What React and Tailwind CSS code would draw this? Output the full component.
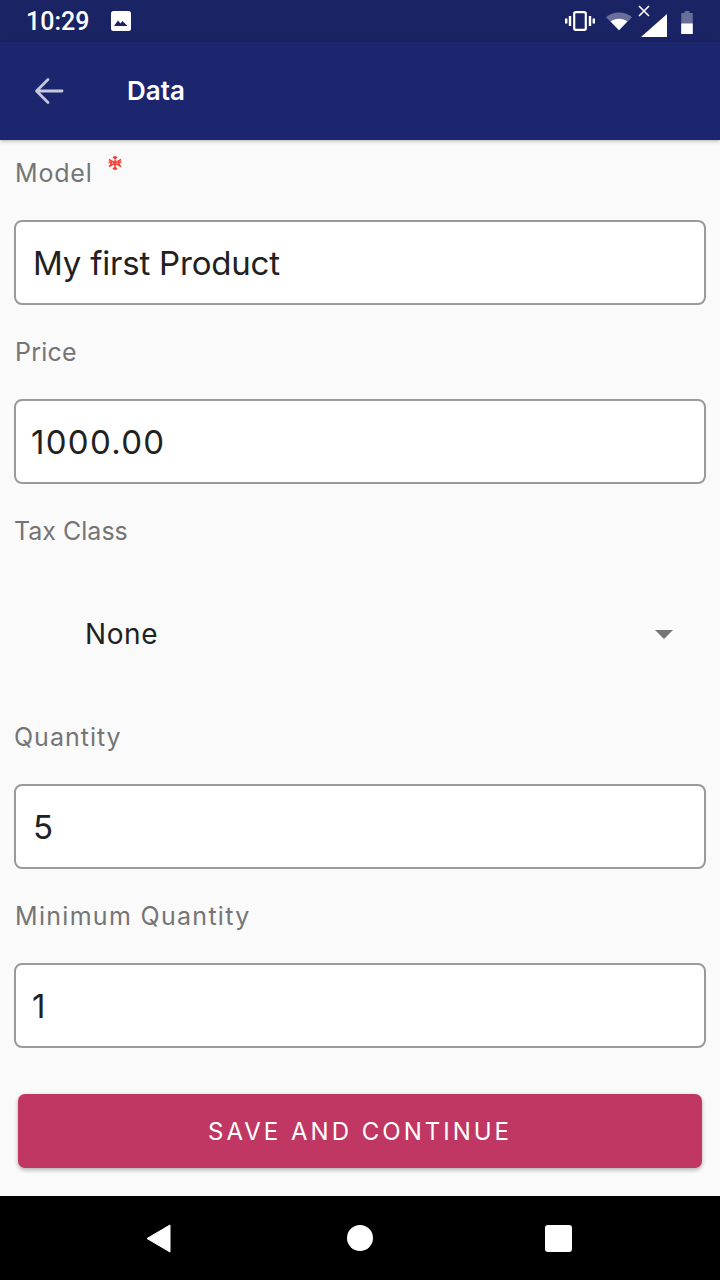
import React from "react";

const Field = ({ label, value, required, indent = "pl-4", labelClass = "tracking-[0.6px]", valueClass = "tracking-[0.7px]" }) => (
  <div>
    <div className={`h-[87px] pb-[6px] flex items-center pl-[14px] text-[25px] text-[#757575] ${labelClass}`}>
      <span>{label}</span>
      {required && (
        <svg className="ml-[14px] -mt-[22px]" width="16" height="16" viewBox="0 0 16 16" stroke="#f44336" strokeWidth="1.6" fill="none">
          <path d="M8 1v14M1.900 4.500l12.200 7M14.100 4.500l-12.200 7M6 1.800l2 2 2-2M6 14.200l2-2 2 2M1.600 7l2.700 .8-.7 2.700M14.400 7l-2.700 .8 .7 2.700" />
        </svg>
      )}
    </div>
    <div className={`mx-[14px] h-[85px] pt-[3px] bg-white border-2 border-[#9a9a9a] rounded-[8px] flex items-center ${indent} text-[33px] text-[#212121] ${valueClass}`}>
      {value}
    </div>
  </div>
);

export default function App() {
  return (
    <div className="w-[720px] h-[1280px] flex flex-col bg-[#fafafa] overflow-hidden font-['Inter','Noto_Sans',sans-serif]">
      <div className="h-[42px] bg-[#1a2364] flex items-center justify-between text-white shrink-0">
        <div className="flex items-center">
          <span className="ml-[26px] pt-[2px] text-[25px] font-medium font-['Roboto',sans-serif]">10:29</span>
          <svg className="ml-[22px]" width="20" height="20" viewBox="0 0 20 20">
            <rect width="20" height="20" rx="2.5" fill="#fff" />
            <path d="M3 15l4-5.500 2.500 3 2-2.500 5 5z" fill="#1a2364" />
          </svg>
        </div>
        <div className="flex items-center mr-[27px]">
          <svg width="30" height="20" viewBox="0 0 30 20" fill="none" stroke="#fff" strokeWidth="2.4">
            <rect x="9.200" y="1.200" width="11.600" height="17.600" rx="1.500" strokeWidth="2.200" />
            <path d="M5 5v10M1.200 7.500v5M25 5v10M28.800 7.500v5" />
          </svg>
          <svg className="ml-[11px]" width="26" height="20" viewBox="0 0 28 20">
            <path d="M0 6C7-1 21-1 28 6L14 20z" fill="#fff" fillOpacity="0.35" />
            <path d="M5 10.500c5-4 13-4 18 0L14 20z" fill="#fff" />
          </svg>
          <div className="relative w-[30px] h-[32px] ml-[6px]">
            <svg className="absolute left-0 top-0" width="12" height="12" viewBox="0 0 12 12" stroke="#fff" strokeWidth="1.6">
              <path d="M1 1l10 10M11 1L1 11" />
            </svg>
            <svg className="absolute right-[1px] bottom-0" width="26" height="23" viewBox="0 0 26 23">
              <path d="M26 0v23H0z" fill="#fff" />
            </svg>
          </div>
          <svg className="ml-[13px] mt-[2px]" width="12" height="23" viewBox="0 0 12 24">
            <path d="M3.500 0h5v2H12v22H0V2h3.500z" fill="#fff" fillOpacity="0.35" />
            <rect y="13" width="12" height="11" fill="#fff" />
          </svg>
        </div>
      </div>

      <div className="h-[98px] bg-[#1c266e] flex items-center shrink-0 shadow-[0_1px_4px_rgba(0,0,0,0.3)] z-10">
        <svg className="ml-[34px]" width="30" height="28" viewBox="0 0 30 28" fill="none" stroke="#c6c8dc" strokeWidth="2.8" strokeLinecap="round" strokeLinejoin="round">
          <path d="M28 14H3M14 2.500L2.500 14 14 25.500" />
        </svg>
        <span className="ml-[63px] pb-[2px] text-[26px] font-semibold text-white">Data</span>
      </div>

      <div className="flex-1 flex flex-col -mt-[7px]">
        <Field label="Model" value="My first Product" required indent="pl-[17px]" labelClass="tracking-[0.8px] pl-[15px]" valueClass="tracking-[-0.2px]" />
        <div className="mt-[7px]">
          <Field label="Price" value="1000.00" indent="pl-[15px]" labelClass="tracking-[0.2px] pl-[15px]" valueClass="tracking-[1.300px]" />
        </div>
        <div className="h-[80px] mt-[7px] pt-[2px] flex items-center pl-[14px] text-[25px] text-[#757575] tracking-[0px]">
          Tax Class
        </div>
        <div className="h-[126px] flex items-center justify-between pl-[85px] pr-[47px] text-[28px] text-[#212121] tracking-[0.6px]">
          <span>None</span>
          <svg width="18" height="9" viewBox="0 0 18 9">
            <path d="M0 0h18L9 9z" fill="#757575" />
          </svg>
        </div>
        <Field label="Quantity" value="5" indent="pl-[17px]" labelClass="tracking-[1px]" />
        <div className="mt-[7px]">
          <Field label="Minimum Quantity" value="1" indent="pl-[16px]" labelClass="tracking-[1.300px] pl-[15px]" />
        </div>
        <button className="mx-[18px] mt-[46px] h-[74px] pt-[2px] bg-[#c13763] rounded-[7px] text-white text-[24px] tracking-[3px] shadow-[0_2px_4px_rgba(0,0,0,0.3)]">
          SAVE AND CONTINUE
        </button>
      </div>

      <div className="h-[84px] bg-black flex items-center justify-center shrink-0">
        <div className="w-[426px] mr-[2px] flex items-center justify-between">
          <svg width="25" height="29" viewBox="0 0 25 29">
            <path d="M24 1v27L1 14.500z" fill="#fff" stroke="#fff" strokeLinejoin="round" />
          </svg>
          <div className="w-[26px] h-[26px] ml-[4px] rounded-full bg-white" />
          <div className="w-[27px] h-[27px] rounded-[3px] bg-white" />
        </div>
      </div>
    </div>
  );
}
